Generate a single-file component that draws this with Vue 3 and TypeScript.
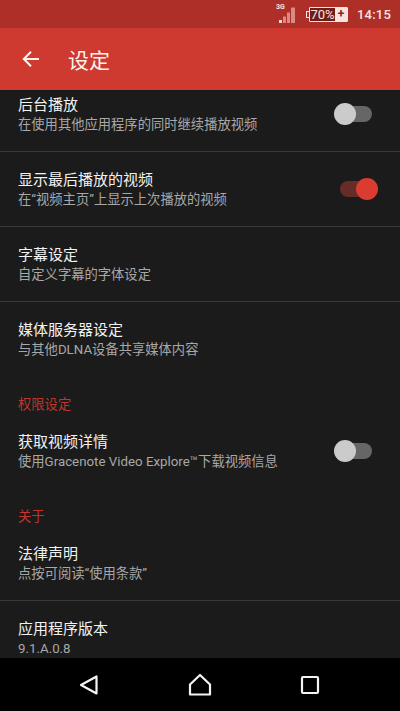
<script setup lang="ts">
interface Row { title: string; sub: string; toggle?: 'on' | 'off'; divider?: boolean; header?: string }
const rows: Row[] = [
  { title: '后台播放', sub: '在使用其他应用程序的同时继续播放视频', toggle: 'off', divider: true },
  { title: '显示最后播放的视频', sub: '在“视频主页”上显示上次播放的视频', toggle: 'on', divider: true },
  { title: '字幕设定', sub: '自定义字幕的字体设定', divider: true },
  { title: '媒体服务器设定', sub: '与其他DLNA设备共享媒体内容' },
  { header: '权限设定', title: '获取视频详情', sub: '使用Gracenote Video Explore™下载视频信息', toggle: 'off' },
  { header: '关于', title: '法律声明', sub: '点按可阅读“使用条款”', divider: true },
  { title: '应用程序版本', sub: '9.1.A.0.8' },
]
</script>

<template>
  <div class="phone">
    <div class="status">
      <div class="signal">
        <span class="net">3G</span>
        <svg width="18" height="16" viewBox="0 0 18 16">
          <path d="M0 16h3v-3H0z" fill="#f3dcd8" />
          <path d="M4 16h3v-6.500H4zM8 16h3V5.500H8zM12 16h4V0.500h-4z" fill="#d98a82" />
        </svg>
      </div>
      <div class="battery">
        <span class="nub"></span>
        <span class="level">70%</span>
        <span class="plus">+</span>
      </div>
      <span class="clock">14:15</span>
    </div>
    <header class="toolbar">
      <svg class="back" width="20" height="20" viewBox="0 0 20 20" fill="none" stroke="#fdf3ee" stroke-width="2">
        <path d="M18 10H3M10 2.800 2.800 10 10 17.200" />
      </svg>
      <h1>设定</h1>
    </header>
    <main class="list">
      <div class="scroll">
        <template v-for="r in rows" :key="r.title">
          <div v-if="r.header" class="section">{{ r.header }}</div>
          <div class="row" :class="{ divided: r.divider, plain: r.header }">
            <div class="text">
              <div class="title">{{ r.title }}</div>
              <div class="sub">{{ r.sub }}</div>
            </div>
            <div v-if="r.toggle" class="switch" :class="r.toggle">
              <span class="track"></span>
              <span class="thumb"></span>
            </div>
          </div>
        </template>
      </div>
    </main>
    <nav class="nav">
      <svg width="22" height="24" viewBox="0 0 22 24" fill="none" stroke="#f4f4f4" stroke-width="2.200" stroke-linejoin="round">
        <path d="M18.500 3.500V20.500L3 12Z" />
      </svg>
      <svg width="24" height="24" viewBox="0 0 24 24" fill="none" stroke="#f4f4f4" stroke-width="2.200" stroke-linejoin="round">
        <path d="M12 2 22 11.500V21.500H2V11.500Z" />
      </svg>
      <svg width="20" height="20" viewBox="0 0 20 20" fill="none" stroke="#f4f4f4" stroke-width="2.200" stroke-linejoin="round">
        <rect x="2" y="2" width="16" height="16" rx="1" />
      </svg>
    </nav>
  </div>
</template>

<style>
html, body { margin: 0; background: #1b1b1b; }
</style>

<style scoped>
.phone {
  width: 400px;
  height: 711px;
  display: flex;
  flex-direction: column;
  overflow: hidden;
  background: #1b1b1b;
  font-family: "Roboto", "Noto Sans CJK SC", sans-serif;
}
.status {
  height: 28px;
  flex: none;
  box-sizing: border-box;
  background: #ad2f27;
  display: flex;
  align-items: center;
  justify-content: flex-end;
  padding-right: 9px;
  color: #f7e4e0;
}
.signal { position: relative; width: 18px; height: 20px; margin-right: 12px; margin-top: -2px; display: flex; align-items: flex-end; }
.signal svg { display: block; }
.net { position: absolute; left: -3px; top: 0; font-size: 7px; font-weight: 700; line-height: 8px; }
.battery { position: relative; display: flex; height: 15px; width: 39px; margin-right: 9px; box-sizing: border-box; border: 1px solid #f7e4e0; border-radius: 1px; }
.nub { position: absolute; left: -4px; top: 3px; width: 3px; height: 7px; border: 1px solid #f7e4e0; border-right: 0; box-sizing: border-box; }
.level { flex: 1; background: #6e1d17; font-size: 13px; line-height: 13px; text-align: center; font-weight: 400; }
.plus { width: 12px; background: #f7e4e0; color: #8e241d; font-size: 12px; line-height: 13px; text-align: center; font-weight: 700; }
.clock { font-size: 13px; font-weight: 500; letter-spacing: 0.2px; }
.toolbar {
  height: 62px;
  flex: none;
  background: #cf3a30;
  display: flex;
  align-items: center;
  padding-left: 21px;
  color: #fdf3ee;
}
.back { margin-right: 27px; }
h1 { margin: 0; font-size: 21px; font-weight: 400; }
.list { flex: 1; min-height: 0; overflow: hidden; }
.scroll { margin-top: -13px; }
.row {
  height: 75px;
  box-sizing: border-box;
  padding: 0 22px 0 18px;
  display: flex;
  align-items: center;
  justify-content: space-between;
}
.row.plain { height: 76px; }
.row.divided { border-bottom: 1px solid #383838; }
.row:last-child { padding-bottom: 1px; }
.text { padding-top: 2px; }
.row:not(.divided) .text { padding-top: 1px; }
.title { font-size: 15px; line-height: 20px; color: #f2f2f2; font-weight: 400; }
.sub { font-size: 13.3px; line-height: 20px; color: #a8a8a8; }
.section { height: 36px; padding: 19px 18px 0; box-sizing: border-box; font-size: 13.3px; line-height: 17px; color: #bd372d; }
.switch { position: relative; width: 44px; height: 22px; flex: none; }
.track { position: absolute; left: 6px; right: 6px; top: 3px; height: 16px; border-radius: 8px; }
.thumb { position: absolute; top: 0; width: 22px; height: 22px; border-radius: 50%; }
.off .track { background: #666; }
.off .thumb { left: 0; background: #cbcbcb; }
.on .track { background: #662c27; }
.on .thumb { right: 0; background: #da3c31; }
.nav {
  height: 53px;
  flex: none;
  background: #000;
  display: flex;
  align-items: center;
  padding-left: 78px;
  gap: 88px;
}
</style>
